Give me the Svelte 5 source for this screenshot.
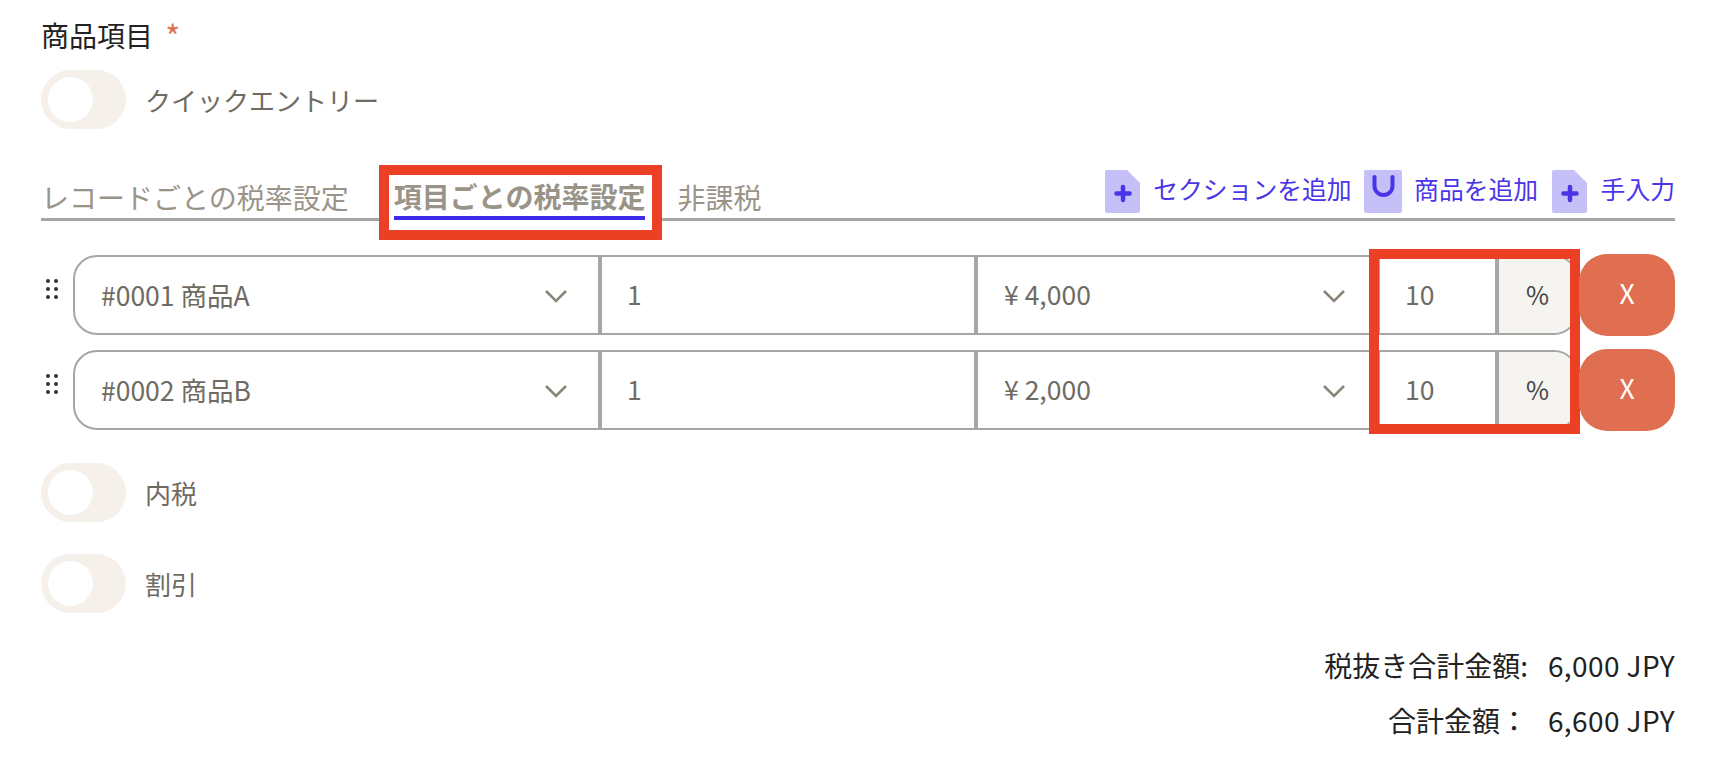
<script lang="ts">
	const rows = [
		{ name: '#0001 商品A', qty: 1, price: '¥ 4,000', tax: 10 },
		{ name: '#0002 商品B', qty: 1, price: '¥ 2,000', tax: 10 }
	];
</script>

{#snippet chevron()}
	<svg class="chevron" width="24" height="14" viewBox="0 0 24 14">
		<path d="M2 2 L12 12 L22 2" fill="none" stroke="#8a8578" stroke-width="2.6" />
	</svg>
{/snippet}

{#snippet fileIcon()}
	<svg width="35" height="43" viewBox="0 0 35 43">
		<path d="M2 0 H22 L35 13 V41 a2 2 0 0 1 -2 2 H2 a2 2 0 0 1 -2 -2 V2 a2 2 0 0 1 2 -2 Z" fill="#c5c0f8" />
		<path d="M18 17 V30 M11.500 23.500 H24.500" fill="none" stroke="#4a34e8" stroke-width="4.500" stroke-linecap="round" />
	</svg>
{/snippet}

<div class="page">
	<div class="label">商品項目 <span class="req">*</span></div>

	<div class="toggle-row first">
		<span class="toggle"><span class="knob"></span></span>
		<span class="toggle-label">クイックエントリー</span>
	</div>

	<div class="tabbar">
		<div class="tabs">
			<span class="tab">レコードごとの税率設定</span>
			<span class="tab active"><span class="tab-text">項目ごとの税率設定</span></span>
			<span class="tab">非課税</span>
		</div>
		<div class="actions">
			<span class="action">{@render fileIcon()}<span>セクションを追加</span></span>
			<span class="action product-action">
				<svg width="38" height="43" viewBox="0 0 38 43">
					<rect width="38" height="43" rx="2" fill="#c5c0f8" />
					<path d="M10.500 7 V16 a9 9 0 0 0 18 0 V7" fill="none" stroke="#4a34e8" stroke-width="4" stroke-linecap="round" />
				</svg>
				<span>商品を追加</span>
			</span>
			<span class="action manual-action">{@render fileIcon()}<span>手入力</span></span>
		</div>
	</div>

	<div class="rows">
		{#each rows as row}
			<div class="row">
				<div class="handle">
					{#each Array(6) as _}<i></i>{/each}
				</div>
				<div class="group">
					<div class="cell product"><span>{row.name}</span>{@render chevron()}</div>
					<div class="cell qty"><span>{row.qty}</span></div>
					<div class="cell price"><span>{row.price}</span>{@render chevron()}</div>
					<div class="cell tax"><span>{row.tax}</span></div>
					<div class="cell pct"><span>%</span></div>
				</div>
				<button class="remove">X</button>
			</div>
		{/each}
		<div class="highlight"></div>
	</div>

	<div class="toggle-row second">
		<span class="toggle"><span class="knob"></span></span>
		<span class="toggle-label">内税</span>
	</div>
	<div class="toggle-row third">
		<span class="toggle"><span class="knob"></span></span>
		<span class="toggle-label">割引</span>
	</div>

	<div class="totals">
		<div class="total-row"><span>税抜き合計金額:</span><span class="amount">6,000 JPY</span></div>
		<div class="total-row"><span>合計金額：</span><span class="amount">6,600 JPY</span></div>
	</div>
</div>

<style>
	:global(body) {
		background: #fff;
	}

	.page {
		height: 764px;
		box-sizing: border-box;
		padding: 16px 37px 0 41px;
		overflow: hidden;
		font-family: "Noto Sans CJK JP", "Noto Sans", sans-serif;
		font-size: 26.500px;
		color: #6f6b63;
	}

	.label {
		color: #222;
		font-size: 28px;
		line-height: 38px;
		font-weight: 400;
	}

	.req {
		color: #e06f52;
		margin-left: 6px;
		font-size: 32px;
		line-height: 20px;
		vertical-align: -2px;
	}

	/* Toggles */
	.toggle-row {
		display: flex;
		align-items: center;
		gap: 19px;
		font-size: 26px;
	}

	.toggle-row.first { margin-top: 16px; }
	.toggle-row.second { margin-top: 32px; }
	.toggle-row.third { margin-top: 32px; }

	.toggle {
		width: 85px;
		height: 59px;
		border-radius: 30px;
		background: #f5f0ea;
		display: flex;
		align-items: center;
		padding-left: 7px;
		box-sizing: border-box;
	}

	.knob {
		width: 45px;
		height: 45px;
		border-radius: 50%;
		background: #fff;
	}

	.toggle-label {
		line-height: 36px;
	}

	/* Tabs */
	.tabbar {
		display: flex;
		justify-content: space-between;
		align-items: flex-end;
		margin-top: 37px;
		border-bottom: 3px solid #a6a6a6;
		height: 52px;
	}

	.tabs {
		display: flex;
		align-items: flex-end;
		font-size: 28px;
		color: #9a9488;
		height: 100%;
	}

	.tab {
		line-height: 40px;
		padding-bottom: 1px;
	}

	.tab.active {
		position: relative;
		margin: 0 32px 0 45px;
		padding-bottom: 0;
		font-weight: 700;
	}

	.tab.active::before {
		content: "";
		position: absolute;
		inset: -12px -17px -22px -15px;
		border: 10px solid #ec4025;
		background: #fff;
	}

	.tab-text {
		position: relative;
		display: block;
		border-bottom: 4px solid #3d2ae8;
		margin-bottom: -2px;
		line-height: 39px;
	}

	.actions {
		display: flex;
		gap: 12.500px;
		color: #4a36e8;
		font-size: 24.800px;
		height: 100%;
		padding-top: 4px;
		box-sizing: border-box;
	}

	.action {
		display: flex;
		gap: 13px;
		line-height: 30px;
	}

	.product-action {
		gap: 12px;
		margin-right: 1px;
	}

	.manual-action {
		gap: 14px;
	}

	.action span {
		margin-top: 3px;
	}

	/* Rows */
	.rows {
		position: relative;
		margin-top: 33px;
		display: flex;
		flex-direction: column;
		gap: 13px;
	}

	.row {
		display: flex;
		align-items: center;
	}

	.handle {
		width: 32px;
		box-sizing: border-box;
		padding: 0 15px 0 5px;
		display: grid;
		grid-template-columns: 4px 4px;
		gap: 4px 4px;
		margin-bottom: 12px;
		flex: none;
	}

	.handle i {
		width: 4px;
		height: 4px;
		border-radius: 50%;
		background: #333;
	}

	.group {
		flex: none;
		width: 1505px;
		height: 80px;
		box-sizing: border-box;
		border: 2px solid #a6a6a6;
		border-radius: 24px;
		display: grid;
		grid-template-columns: 523px 376px 402px 119px 1fr;
		overflow: hidden;
	}

	.cell {
		display: flex;
		align-items: center;
		justify-content: space-between;
		border-left: 4px solid #a6a6a6;
		box-sizing: border-box;
		padding-bottom: 4px;
	}

	.cell.product {
		border-left: none;
		padding-left: 26px;
		padding-right: 30px;
	}

	.product span { padding-top: 2px; }

	.cell.qty { padding-left: 25px; }
	.cell.price { padding-left: 26px; padding-right: 30px; }
	.cell.tax { padding-left: 25px; }

	.cell.pct {
		background: #f5f4f1;
		color: #444;
		padding-left: 27px;
		padding-bottom: 2px;
		font-size: 25px;
	}

	.chevron {
		margin-top: 6px;
	}

	.remove {
		flex: none;
		margin-left: 1px;
		width: 96px;
		height: 82px;
		border: none;
		border-radius: 28px;
		background: #e06f52;
		color: #fff;
		font: inherit;
		padding: 0 0 6px;
		position: relative;
		z-index: 1;
	}

	.highlight {
		position: absolute;
		right: 95px;
		top: -5px;
		width: 211px;
		height: 185px;
		box-sizing: border-box;
		border: 10px solid #ec4025;
	}

	/* Totals */
	.totals {
		margin-top: 25px;
		color: #222;
		font-size: 28px;
	}

	.total-row {
		display: flex;
		justify-content: flex-end;
		gap: 17px;
		line-height: 55px;
	}

	.amount {
		width: 130px;
		text-align: right;
		white-space: nowrap;
		letter-spacing: 0.4px;
	}
</style>
